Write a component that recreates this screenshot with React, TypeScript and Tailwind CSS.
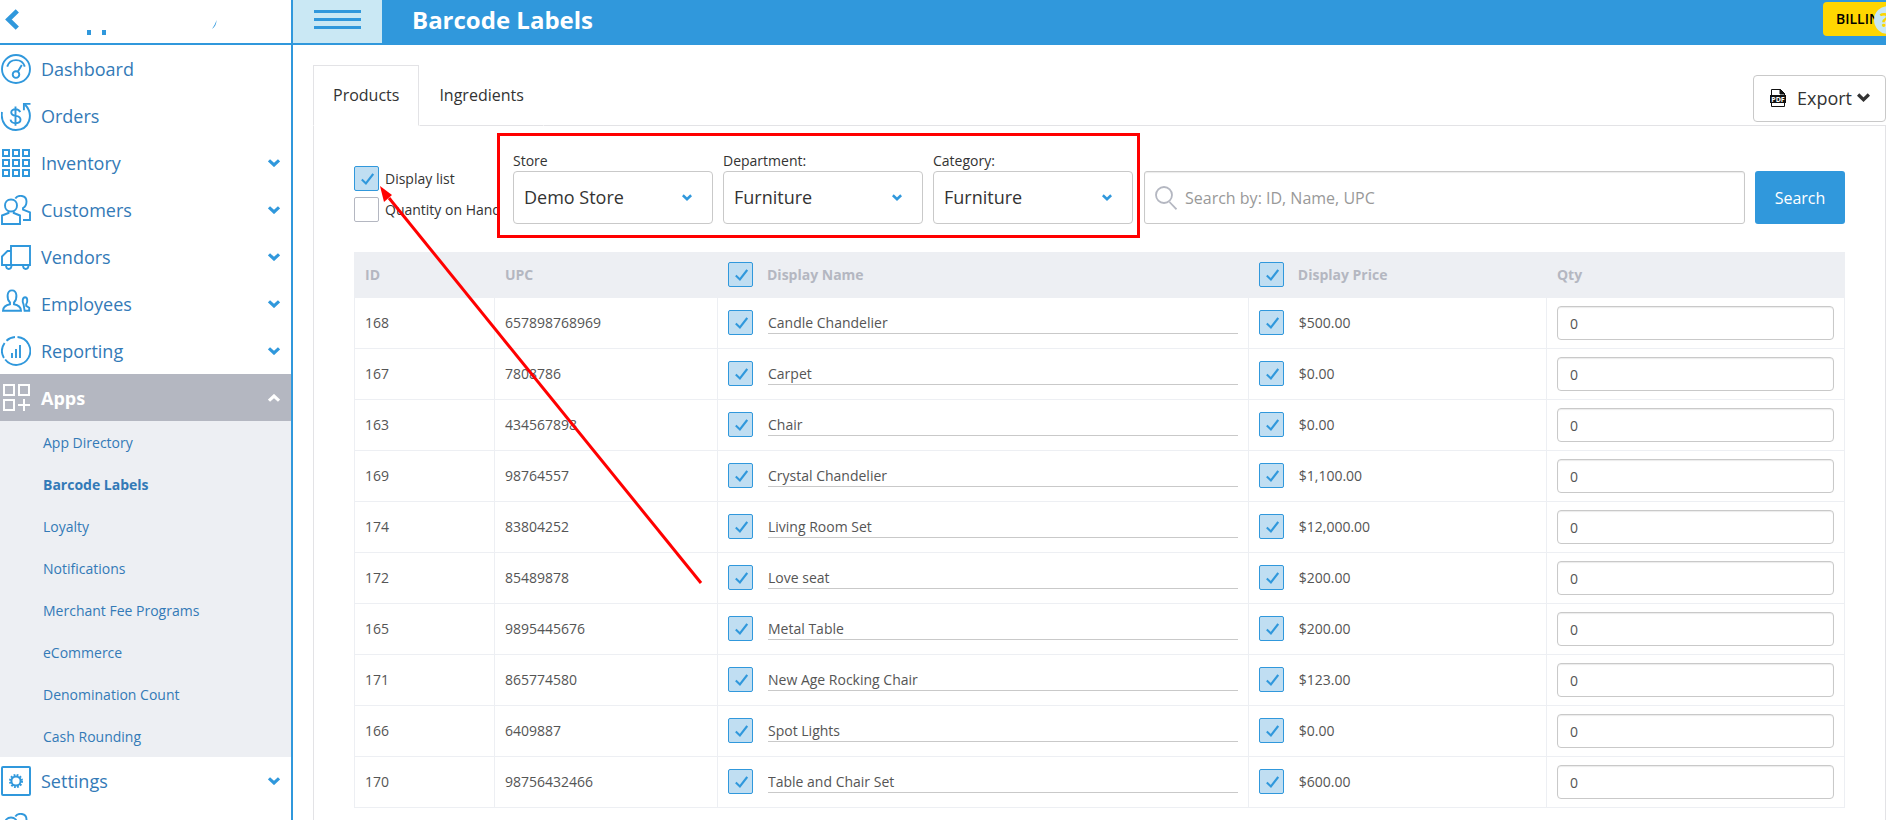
import React, { useState } from 'react';

type IconProps = { className?: string };

function ChevronLeft({ className }: IconProps) {
  return (
    <svg viewBox="0 0 14 21" className={className} fill="none" stroke="currentColor" strokeWidth="4.6">
      <path d="M12.3 1.8 3.4 10.5l8.9 8.7" />
    </svg>
  );
}

function ChevronDown({ className }: IconProps) {
  return (
    <svg viewBox="0 0 12 8" className={className} fill="none" stroke="currentColor" strokeWidth="3.1">
      <path d="M1 1.3 6 6l5-4.7" />
    </svg>
  );
}

function Check({ className }: IconProps) {
  return (
    <svg viewBox="0 0 13 12" className={className} fill="none" stroke="currentColor" strokeWidth="2.1">
      <path d="M.8 6.6 4.9 10.4 12.2 1" />
    </svg>
  );
}

function IconFrame({ children }: { children: React.ReactNode }) {
  return (
    <svg viewBox="0 0 30 30" className="w-[30px] h-[30px] shrink-0" fill="none" stroke="currentColor" strokeWidth="1.9">
      {children}
    </svg>
  );
}

function DashboardIcon() {
  return (
    <IconFrame>
      <circle cx="15" cy="15" r="14" />
      <path d="M6.2 12.6a9.2 9.2 0 0 1 17.600 0M16.600 17.900l4.200-7" />
      <circle cx="15" cy="20.600" r="3.300" />
    </IconFrame>
  );
}

function OrdersIcon() {
  return (
    <IconFrame>
      <path d="M1 11C-.6 20.500 5.500 29 15 29c13 0 18.500-15 9-25.500" />
      <path d="M29.500 2.900h-6.600v6.300" />
      <path d="M19.200 11.200c-.8-2-2.300-3-4.600-3-5.800 0-5.800 6 0 6.700 6.700.7 6.300 7.300.2 7.300-3 0-4.800-1.300-5.300-3.600M14.500 5.400v19.400" />
    </IconFrame>
  );
}

function InventoryIcon() {
  return (
    <IconFrame>
      {[2, 12, 22].map((y) =>
        [2, 12, 22].map((x) => <rect key={`${x}-${y}`} x={x} y={y} width="6" height="6" strokeWidth="2" />)
      )}
    </IconFrame>
  );
}

function CustomersIcon() {
  return (
    <IconFrame>
      <path d="M10 16.500c-8 0-8-12 0-12s8 12 0 12ZM7.500 16.500v1.500L1 20.500V29h18v-8.500L12.700 18v-1.500" />
      <path d="M14.300 3.500C17-.4 25.500-.4 25.500 6.500c0 3.500-1.500 5.500-3.500 6.500v1.500l7 3V25h-7" />
    </IconFrame>
  );
}

function VendorsIcon() {
  return (
    <IconFrame>
      <path d="M10 4h19v19H1v-8.500L6.500 9H10ZM10 4v19" />
      <path d="M5 23c0 5.300 5.500 5.300 5.500 0M22 23c0 5.300 5.500 5.300 5.500 0" />
    </IconFrame>
  );
}

function EmployeesIcon() {
  return (
    <IconFrame>
      <path d="M9 13.500C5.500 10 5.500 1.400 11 1.400s5.500 8.600 2 12.100v1.800c4.500.8 6.800 3 7 6.400H2c.2-3.400 2.500-5.600 7-6.400Z" />
      <path d="M22.600 15.500c-1.800-3.500-.8-7.300 1.500-7.300s3 4.300 1.100 7v1.700l3 1.800v3h-4.600Z" />
    </IconFrame>
  );
}

function ReportingIcon() {
  return (
    <IconFrame>
      <path d="M16.500 1a14 14 0 1 1-12.300 22.500M2.900 22A14 14 0 0 1 3.600 7M5.500 4.700A14 14 0 0 1 14 1" />
      <path d="M11 17v5M15 13v9M19 9v13" />
    </IconFrame>
  );
}

function AppsIcon() {
  return (
    <IconFrame>
      <g strokeWidth="2">
        <rect x="3" y="2" width="10" height="10" />
        <rect x="18" y="2" width="10" height="10" />
        <rect x="3" y="17" width="10" height="10" />
        <path d="M23 16v12M17 22h12" />
      </g>
    </IconFrame>
  );
}

function SettingsIcon() {
  return (
    <IconFrame>
      <rect x="1" y="1" width="28" height="28" rx="1" strokeWidth="2" />
      <circle cx="15" cy="15" r="4.600" strokeWidth="2" />
      <circle cx="15" cy="15" r="6" strokeWidth="2" strokeDasharray="1.750 1.390" />
    </IconFrame>
  );
}

const subItems = [
  'App Directory',
  'Barcode Labels',
  'Loyalty',
  'Notifications',
  'Merchant Fee Programs',
  'eCommerce',
  'Denomination Count',
  'Cash Rounding',
];

const navItems = [
  { label: 'Dashboard', icon: DashboardIcon, expandable: false },
  { label: 'Orders', icon: OrdersIcon, expandable: false },
  { label: 'Inventory', icon: InventoryIcon, expandable: true },
  { label: 'Customers', icon: CustomersIcon, expandable: true },
  { label: 'Vendors', icon: VendorsIcon, expandable: true },
  { label: 'Employees', icon: EmployeesIcon, expandable: true },
  { label: 'Reporting', icon: ReportingIcon, expandable: true },
];

const products = [
  { id: 168, upc: '657898768969', name: 'Candle Chandelier', price: '$500.00' },
  { id: 167, upc: '7808786', name: 'Carpet', price: '$0.00' },
  { id: 163, upc: '434567898', name: 'Chair', price: '$0.00' },
  { id: 169, upc: '98764557', name: 'Crystal Chandelier', price: '$1,100.00' },
  { id: 174, upc: '83804252', name: 'Living Room Set', price: '$12,000.00' },
  { id: 172, upc: '85489878', name: 'Love seat', price: '$200.00' },
  { id: 165, upc: '9895445676', name: 'Metal Table', price: '$200.00' },
  { id: 171, upc: '865774580', name: 'New Age Rocking Chair', price: '$123.00' },
  { id: 166, upc: '6409887', name: 'Spot Lights', price: '$0.00' },
  { id: 170, upc: '98756432466', name: 'Table and Chair Set', price: '$600.00' },
];

interface CheckboxProps {
  id?: string;
  label?: string;
  defaultChecked?: boolean;
}

function Checkbox({ id, label, defaultChecked = true }: CheckboxProps) {
  return (
    <span className="relative inline-flex w-[25px] h-[25px] shrink-0">
      <input
        id={id}
        type="checkbox"
        aria-label={label}
        defaultChecked={defaultChecked}
        className="peer appearance-none w-full h-full rounded-[2px] border border-[#b4b7c1] bg-white checked:border-[#3098dc] checked:bg-[#c0def2]"
      />
      <Check className="absolute left-[7px] top-[7px] w-[13px] h-3 text-[#3098dc] pointer-events-none hidden peer-checked:block" />
    </span>
  );
}

function Sidebar() {
  return (
    <aside className="w-[293px] shrink-0 border-r-2 border-[#3098dc] bg-white text-[#337ab7]">
      <div className="flex h-[45px] items-start border-b-2 border-[#3098dc] text-[#3098dc]">
        <button type="button" aria-label="Back" className="ml-[5px] mt-[9px]">
          <ChevronLeft className="w-[14px] h-[21px]" />
        </button>
        <svg viewBox="0 0 140 40" className="ml-[61px] w-[140px] h-10" fill="currentColor">
          <path d="M7 30h4v5H7zM22 30h4v5h-4z" />
          <path d="M136.500 20c0 4-1.500 7-4.500 9 2-3 3.500-5.500 4.500-9Z" />
        </svg>
      </div>
      <nav>
        {navItems.map(({ label, icon: Icon, expandable }) => (
          <a key={label} href="#" className="flex h-[47px] items-center pl-px pr-[11px] text-lg">
            <span className="text-[#3098dc]"><Icon /></span>
            <span className="ml-[10px] flex-1">{label}</span>
            {expandable && <ChevronDown className="w-3 h-2 text-[#3098dc]" />}
          </a>
        ))}
        <a href="#" className="flex h-[47px] items-center bg-[#b4b7c1] pl-px pr-[11px] text-lg font-bold text-white">
          <AppsIcon />
          <span className="ml-[10px] flex-1">Apps</span>
          <ChevronDown className="w-3 h-2 rotate-180" />
        </a>
        <div className="bg-[#edeff3]">
          {subItems.map((item) => (
            <a
              key={item}
              href="#"
              className={`flex h-[42px] items-center pl-[43px] pt-0.5 text-sm ${item === 'Barcode Labels' ? 'font-bold' : ''}`}
            >
              {item}
            </a>
          ))}
        </div>
        <a href="#" className="flex h-[47px] items-center pl-px pr-[11px] text-lg">
          <span className="text-[#3098dc]"><SettingsIcon /></span>
          <span className="ml-[10px] flex-1">Settings</span>
          <ChevronDown className="w-3 h-2 text-[#3098dc]" />
        </a>
        <a href="#" aria-label="Account" className="flex h-[47px] items-center pl-px text-[#3098dc]">
          <CustomersIcon />
        </a>
      </nav>
    </aside>
  );
}

function Header() {
  return (
    <header className="flex h-[45px] items-start overflow-hidden bg-[#3098dc]">
      <button
        type="button"
        aria-label="Toggle menu"
        className="flex h-[43px] w-[89px] shrink-0 flex-col items-center gap-[5px] bg-[#cae8f4] pt-[10px]"
      >
        <span className="h-[3px] w-[47px] bg-[#3098dc]" />
        <span className="h-[3px] w-[47px] bg-[#3098dc]" />
        <span className="h-[3px] w-[47px] bg-[#3098dc]" />
      </button>
      <h1 className="ml-[30px] flex-1 text-2xl leading-10 font-bold text-white">Barcode Labels</h1>
      <div className="relative mt-0.5 w-[63px] shrink-0">
        <button type="button" className="h-[34px] w-[90px] rounded-[4px] bg-[#ffd600] pl-[13px] text-left text-sm font-semibold text-black">
          BILLING
        </button>
        <button
          type="button"
          aria-label="Help"
          className="absolute left-[51px] top-1 h-7 w-7 rounded-full bg-[#cae8f4] pl-[6px] text-left text-xl leading-7 font-bold text-[#ffd600]"
        >
          ?
        </button>
      </div>
    </header>
  );
}

function PdfIcon() {
  return (
    <svg viewBox="0 0 16 18" className="w-4 h-[18px]" fill="none" stroke="#111">
      <path d="M1.500 7V.5h9L14.500 4.500V7M1.500 13v4.500h13V13" />
      <path d="M10 0v5h5" fill="#111" />
      <path d="M0 6h16v8H0z" fill="#111" stroke="none" />
      <text x="8" y="12.500" fontSize="7" fontWeight="700" textAnchor="middle" fill="#fff" stroke="none">
        PDF
      </text>
    </svg>
  );
}

interface SelectFieldProps {
  id: string;
  label: string;
  value: string;
}

function SelectField({ id, label, value }: SelectFieldProps) {
  return (
    <div className="w-[200px] shrink-0">
      <label htmlFor={id} className="block text-sm leading-5 text-[#333]">
        {label}
      </label>
      <div className="relative">
        <select
          id={id}
          className="block h-[53px] w-full appearance-none rounded-[4px] border border-[#c9c9c9] bg-white pl-[10px] pr-10 pb-0.5 text-lg text-[#333]"
        >
          <option>{value}</option>
        </select>
        <ChevronDown className="pointer-events-none absolute right-[21px] top-[23px] h-[7px] w-[10px] text-[#3098dc]" />
      </div>
    </div>
  );
}

function Filters() {
  return (
    <div className="flex items-start">
      <div className="mt-[15px] w-[143px] shrink-0 space-y-[6px] overflow-hidden text-sm text-[#333]">
        <div className="flex items-center gap-[6px]">
          <Checkbox id="display-list" />
          <label htmlFor="display-list">Display list</label>
        </div>
        <div className="flex items-center gap-[6px] whitespace-nowrap">
          <Checkbox id="qty-on-hand" defaultChecked={false} />
          <label htmlFor="qty-on-hand">Quantity on Hand</label>
        </div>
      </div>
      <div className="relative ml-4 flex shrink-0 gap-[10px]">
        <SelectField id="store" label="Store" value="Demo Store" />
        <SelectField id="department" label="Department:" value="Furniture" />
        <SelectField id="category" label="Category:" value="Furniture" />
        <div className="pointer-events-none absolute -left-4 -right-[7px] -top-[18px] -bottom-[14px] border-3 border-[#ff0000]" />
      </div>
      <div className="relative ml-[11px] mt-5 min-w-0 flex-1">
        <svg viewBox="0 0 22 24" className="absolute left-[11px] top-[15px] h-6 w-[22px]" fill="none" stroke="#b4b7c1" strokeWidth="1.8">
          <circle cx="9" cy="9" r="8" />
          <path d="m14.500 16 7 7.300" />
        </svg>
        <input
          type="text"
          aria-label="Search products"
          placeholder="Search by: ID, Name, UPC"
          className="block h-[53px] w-full rounded-[3px] border border-[#c9c9c9] pl-10 text-base shadow-[inset_0_1px_1px_rgba(0,0,0,0.08)] placeholder:text-[#999]"
        />
      </div>
      <button type="button" className="ml-[10px] mt-5 h-[53px] w-[90px] shrink-0 rounded-[3px] bg-[#3098dc] text-base text-white">
        Search
      </button>
    </div>
  );
}

function ProductTable() {
  return (
    <table className="mt-7 w-full table-fixed border-separate border-spacing-0 text-left text-sm text-[#555]">
      <colgroup>
        <col className="w-[140px]" />
        <col className="w-[223px]" />
        <col className="w-[35.6%]" />
        <col className="w-[20%]" />
        <col />
      </colgroup>
      <thead>
        <tr className="h-[46px] bg-[#edeff3] text-[#b4b7c1]">
          <th className="pl-[11px]">ID</th>
          <th className="pl-[11px]">UPC</th>
          <th className="pl-[11px] pb-px">
            <div className="flex items-center gap-[14px]">
              <Checkbox label="Display all names" />
              Display Name
            </div>
          </th>
          <th className="pl-[11px] pb-px">
            <div className="flex items-center gap-[14px]">
              <Checkbox label="Display all prices" />
              Display Price
            </div>
          </th>
          <th className="pl-[11px]">Qty</th>
        </tr>
      </thead>
      <tbody>
        {products.map((p) => (
          <tr key={p.id} className="h-[51px]">
            <td className="border-b border-l border-[#edeff3] pl-[10px]">{p.id}</td>
            <td className="border-b border-l border-[#edeff3] pl-[10px]">{p.upc}</td>
            <td className="border-b border-l border-[#edeff3] px-[10px] pb-px">
              <div className="flex items-center gap-[15px]">
                <Checkbox label={`Display name of ${p.name}`} />
                <input
                  type="text"
                  aria-label="Display name"
                  defaultValue={p.name}
                  className="h-[23px] min-w-0 flex-1 border-b border-[#c9c9c9]"
                />
              </div>
            </td>
            <td className="border-b border-l border-[#edeff3] pl-[10px] pb-px">
              <div className="flex items-center gap-[15px]">
                <Checkbox label={`Display price of ${p.name}`} />
                {p.price}
              </div>
            </td>
            <td className="border-x border-b border-[#edeff3] px-[10px]">
              <input
                type="text"
                aria-label={`Quantity of ${p.name}`}
                defaultValue="0"
                className="block h-[34px] w-full rounded-[4px] border border-[#c9c9c9] px-3 shadow-[inset_0_1px_1px_rgba(0,0,0,0.08)]"
              />
            </td>
          </tr>
        ))}
      </tbody>
    </table>
  );
}

export default function App() {
  const [tab, setTab] = useState('Products');

  return (
    <div className="flex h-screen overflow-hidden bg-white font-['Open_Sans','Noto_Sans',sans-serif]">
      <Sidebar />
      <div className="flex min-w-0 flex-1 flex-col">
        <Header />
        <main className="relative flex min-h-0 flex-1 flex-col pl-5 pt-5">
          <div className="flex items-end">
            {['Products', 'Ingredients'].map((name) => (
              <button
                key={name}
                type="button"
                onClick={() => setTab(name)}
                className={`h-[61px] border px-[19px] pb-0.5 text-base text-[#333] ${
                  tab === name ? 'border-[#e3e3e6] border-b-white' : 'border-transparent border-b-[#e3e3e6]'
                }`}
              >
                {name}
              </button>
            ))}
            <div className="flex h-[61px] flex-1 items-start justify-end border-b border-[#e3e3e6] pt-[10px]">
              <button
                type="button"
                className="flex h-[47px] w-[133px] items-center rounded-[4px] border border-[#c9c9c9] bg-white pb-0.5 pl-4 text-lg text-[#333]"
              >
                <PdfIcon />
                <span className="ml-[11px] mr-[5px]">Export</span>
                <ChevronDown className="h-[9px] w-[13px]" />
              </button>
            </div>
          </div>
          <div className="flex-1 border-x border-[#e3e3e6] px-10 pt-[25px]">
            <Filters />
            <ProductTable />
          </div>
          <svg
            viewBox="0 0 330 404"
            className="pointer-events-none absolute left-[84px] top-[138px] h-[404px] w-[330px]"
            fill="#ff0000"
            stroke="#ff0000"
          >
            <path d="M12 15 324 400" strokeWidth="3" fill="none" />
            <path d="m3 3 12 9-8 7Z" stroke="none" />
          </svg>
        </main>
      </div>
    </div>
  );
}
